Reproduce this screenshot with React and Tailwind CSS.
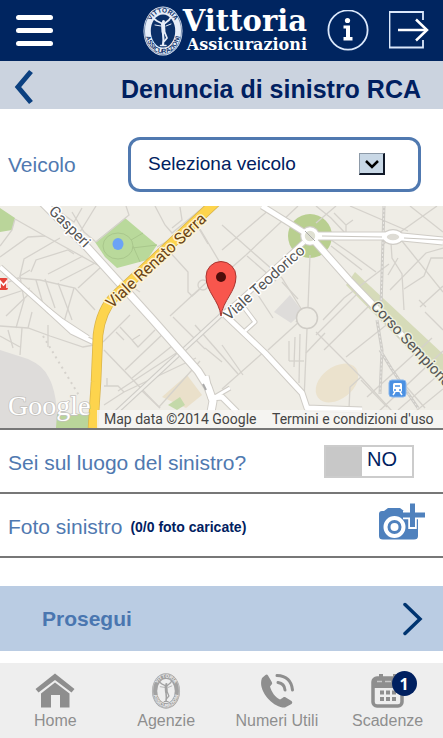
import React, { useState } from 'react';

const Seal = ({ id, color, ground, className }) => (
  <svg viewBox="0 0 40 50" className={className} aria-hidden="true">
    <ellipse cx="20" cy="25" rx="19.5" ry="24.5" fill={color} />
    <ellipse cx="20" cy="25" rx="18.5" ry="23.4" fill="none" stroke={ground} strokeWidth="0.5" />
    <ellipse cx="20" cy="25" rx="12.2" ry="16.5" fill={ground} />
    <path id={`${id}-top`} d="M5.8 25 A14.2 18.6 0 0 1 34.2 25" fill="none" />
    <path id={`${id}-bottom`} d="M2.4 25 A17.6 22.4 0 0 0 37.6 25" fill="none" />
    <text fill={ground} fontSize="6.5" fontWeight="700" fontFamily="Liberation Sans, sans-serif">
      <textPath href={`#${id}-top`} startOffset="50%" textAnchor="middle">VITTORIA</textPath>
    </text>
    <text fill={ground} fontSize="6.5" fontWeight="700" fontFamily="Liberation Sans, sans-serif">
      <textPath href={`#${id}-bottom`} startOffset="50%" textAnchor="middle">ASSICURAZIONI</textPath>
    </text>
    {/* winged figure */}
    <g fill="none" stroke={color} strokeLinecap="round" strokeLinejoin="round">
      <circle cx="20.5" cy="15.5" r="1.5" fill={color} stroke="none" />
      <path d="M20 18 L20.5 26" strokeWidth="4" />
      <path d="M20 18 L14 15 L10 12 M21 18 L26 14 L28 11" strokeWidth="1.8" />
      <path d="M18 20 L12 19 M23 20 L28 18" strokeWidth="1" />
      <path d="M20 27 L20.5 34 L20 39" strokeWidth="2.2" />
      <path d="M22 27 L24 32 L21.5 35" strokeWidth="1.8" />
      <path d="M17.5 39.5 H23" strokeWidth="1.5" />
    </g>
  </svg>
);

// thin streets of the quarter
const streets = [
  'M15 219 L45 236 L103 268 L140 292', 'M15 219 L12 230 L0 246', 'M0 257 L28 237 L45 236', 'M30 270 L20 276 L24 259 L60 238',
  'M31 272 L36 260 L68 250 L74 254', 'M48 274 L83 256', 'M60 281 L95 263', 'M78 288 L101 267', 'M0 286 L18 278 L40 280 L75 288 L95 310',
  'M20 276 L24 300 L16 328', 'M36 280 L43 304', 'M45 279 L55 308', 'M58 283 L72 320', 'M74 288 L64 322', 'M0 298 L30 288', 'M6 316 L32 291',
  'M0 326 L28 328 L50 336 L83 347 L94 345', 'M0 336 L20 347', 'M8 330 L13 348', 'M22 328 L20 355', 'M48 325 L48 347', 'M28 328 L32 312',
  'M96 242 L84 232 L72 212 M80 232 L96 206', 'M96 242 L129 215 L126 206', 'M60 212 L74 222 L82 208', 'M155 206 L165 225 L172 233 L205 206', 'M180 207 L182 220 L172 228',
  'M200 229 L222 266', 'M167 249 L188 272 L188 292 L192 296 L200 289', 'M195 222 L208 244', 'M157 247 L175 237',
  'M103 342 L130 315', 'M104 350 L160 408', 'M116 332 L124 340', 'M120 327 L132 340 L140 335 M132 340 L138 347 L155 330',
  'M125 370 L165 332', 'M132 378 L177 342', 'M118 391 L184 348', 'M104 386 L118 386 L124 392', 'M107 378 L107 386',
  'M104 405 L124 392 L196 358', 'M159 407 L200 361', 'M140 389 L160 408', 'M170 316 L221 269', 'M173 317 L205 349', 'M195 325 L238 374', 'M205 348 L222 362',
  'M222 225 L282 278 L305 315', 'M222 250 L270 209', 'M222 276 L246 255 L298 206', 'M247 256 L276 281', 'M310 255 L308 307',
  'M282 282 L298 299', 'M296 322 L307 308', 'M256 292 L273 318',
  'M316 206 L331 218 L346 234 L346 225 L334 213 M346 225 L353 220', 'M316 223 L336 206', 'M324 235 L350 253 L376 272', 'M323 320 L344 298 L389 264',
  'M331 246 L362 270', 'M350 206 L408 231', 'M382 245 L437 206', 'M410 206 L443 232', 'M402 241 L443 292',
  'M391 243 L392 258 L402 274 L404 310', 'M390 290 L426 253 L443 248', 'M404 289 L424 276 L431 258 H443', 'M388 275 L398 258', 'M420 307 L443 286', 'M419 300 L426 307',
  'M373 302 L324 350', 'M359 292 L316 335', 'M346 357 L390 322', 'M316 332 L361 377 L401 421', 'M306 353 L325 333',
  'M361 377 L350 387 L349 408', 'M361 380 L387 407', 'M367 397 L432 338', 'M376 414 L443 351', 'M398 410 L443 371', 'M410 416 L443 389', 'M404 384 L425 408',
  'M307 329 L304 400', 'M289 341 L289 361', 'M295 337 L294 367', 'M300 334 L299 383', 'M289 361 H304', 'M268 350 L300 321',
  'M222 389 L266 350', 'M222 345 L243 375', 'M425 312 L443 330'
];

const wideRoads = [
  { d: 'M35 195 L86 246 L153 320 L198 371 L208 387 L213 401 L211 412', w: 7 },
  { d: 'M0 267 L47 309 L72 332 L93 342', w: 4 },
  { d: 'M47 309 L62 321 L88 338', w: 4 },
  { d: 'M206 376 L211 398 L222 397 L237 412', w: 5 },
  { d: 'M213 398 L230 388', w: 3 },
  { d: 'M262 206 L310 236', w: 5 },
  { d: 'M310 236 L349 280 L374 306 L443 379', w: 6 },
  { d: 'M310 236 L392 236 L443 241', w: 7 },
  { d: 'M304 242 L238 302 L221 316', w: 4 },
  { d: 'M225 315 L265 353 L302 393 L307 408 L362 410', w: 5 },
  { d: 'M240 302 L255 322 L245 331', w: 3 }
];

const MapView = () => (
  <svg viewBox="0 206 443 222" preserveAspectRatio="xMidYMid slice" className="block h-[222px] w-full" role="img" aria-label="Mappa">
    <rect x="0" y="206" width="443" height="222" fill="#efede6" />
    <path d="M0 350 L28 359 Q44 366 49 378 Q57 392 58 428 H0 Z" fill="#dedcda" />
    <path d="M57 414 H93 V428 H56 Z M0 208 L15 218 L12 230 L0 232 Z" fill="#bad59a" />
    <path d="M95 242 L125 218 L157 245 L147 260 L117 268 L105 257 Z" fill="#b9d99b" />
    <circle cx="310" cy="236" r="22" fill="#b9cf90" />
    <path d="M355 272 L443 354 V384 L346 285 Z" fill="#d6dbb9" />
    <path d="M274 312 L290 295 L303 312 L291 323 Z" fill="#dedcda" />
    <path d="M162 397 L187 375 L202 395 L186 408 Z" fill="#eae0ca" />
    <path d="M168 405 L180 397 L185 405 L177 410 Z" fill="#c4d9a9" />
    <ellipse cx="337" cy="383" rx="24" ry="16" transform="rotate(-38 337 383)" fill="#ebe2cd" />

    <g fill="none" stroke="#d5d2cc" strokeWidth="1.3">
      {streets.map((d) => <path key={d} d={d} />)}
      <ellipse cx="118" cy="246" rx="15" ry="13" stroke="#a9c78c" strokeWidth="1" />
      <path d="M133 246 L140 262 M131 240 L143 233 M132 248 L157 245" stroke="#a9c78c" strokeWidth="1" />
      <circle cx="203" cy="285" r="5" />
      <path d="M43 336 L80 397" strokeDasharray="2 4" strokeWidth="2" />
    </g>
    <g fill="none" stroke="#cfcdc8">
      <path d="M384 206 L381 307 M377 320 L382 350 L380 394 M380 350 L391 368 L418 408" strokeWidth="3" />
      <path d="M384 206 L381 307 M377 320 L382 350 L380 394 M380 350 L391 368 L418 408" stroke="#ebe9e5" strokeDasharray="2 2" />
      <path d="M232 305 L110 418" strokeWidth="5" />
      <path d="M232 305 L110 418" stroke="#f1efe9" strokeWidth="2.5" />
    </g>

    <g fill="none" stroke="#cfccc6" strokeLinejoin="round">
      {wideRoads.map((r) => <path key={r.d} d={r.d} strokeWidth={r.w + 2} />)}
      <circle cx="310" cy="236" r="7" strokeWidth="6" />
      <ellipse cx="393" cy="237" rx="8" ry="5" strokeWidth="6" />
    </g>
    <g fill="none" stroke="#fff" strokeLinejoin="round">
      {wideRoads.map((r) => <path key={r.d} d={r.d} strokeWidth={r.w} />)}
    </g>
    <path d="M322 236 L382 237 M404 238 L443 240" stroke="#c9c6c0" />
    <circle cx="310" cy="236" r="7" fill="#dfe0d2" stroke="#fff" strokeWidth="3.5" />
    <path d="M305 231 L315 241" stroke="#aaa" />
    <ellipse cx="393" cy="237" rx="8" ry="5" fill="#dedcd5" stroke="#fff" strokeWidth="3.5" />
    <circle cx="307" cy="318" r="10.5" fill="#efede6" stroke="#cfccc6" strokeWidth="1.5" />
    <path d="M203 384 L206 390" stroke="#aaa" strokeWidth="2" />

    <path d="M218 200 L115 296 Q101 310 98 335 L96 382 L93 428" fill="none" stroke="#d9b44b" strokeWidth="10.5" />
    <path d="M218 200 L115 296 Q101 310 98 335 L96 382 L93 428" fill="none" stroke="#fdd44d" strokeWidth="9" />
    <ellipse cx="118" cy="244" rx="5.5" ry="6" fill="#6ba3f5" />

    <g fontFamily="Roboto, sans-serif" fontSize="15" stroke="#fff" strokeWidth="3" strokeLinejoin="round" paintOrder="stroke" fill="#555">
      <text transform="translate(48 212) rotate(45)">Gasperi</text>
      <text transform="translate(112 309) rotate(-43)" fontSize="16" fill="#6b4413" stroke="#fff3cb">Viale Renato Serra</text>
      <text transform="translate(229 321) rotate(-42)">Viale Teodorico</text>
      <text transform="translate(370 307) rotate(47)" stroke="#eef0df">Corso Sempione</text>
    </g>

    <rect x="-5" y="278" width="13" height="12" rx="2" fill="#e4443a" />
    <path d="M0 288 V281 L3.5 285 L7 281 V288" fill="none" stroke="#fff" strokeWidth="1.6" />
    <rect x="389" y="380" width="17" height="17" rx="3" fill="#4a90e2" stroke="#86b5ed" />
    <rect x="393" y="383" width="9" height="9" rx="1.5" fill="#fff" />
    <path d="M395 386 H400 M394 390 H396 M399 390 H401" stroke="#4a90e2" strokeWidth="1.5" />
    <path d="M393 395 L395 392 M402 395 L400 392" stroke="#fff" strokeWidth="1.5" />

    <path d="M221 316 C219 300 206 292 206 276.5 A15 15 0 0 1 236 276.5 C236 292 223 300 221 316 Z" fill="#f8564d" stroke="#a83530" strokeWidth="1" />
    <circle cx="221" cy="277" r="5" fill="#4d0d0b" />

    <text x="8" y="415" fontFamily="Liberation Serif, serif" fontSize="28" fill="#fff" stroke="#c4c2be" strokeWidth="1.5" paintOrder="stroke">Google</text>
    <rect x="97" y="410" width="346" height="18" fill="#f6f5f2" fillOpacity="0.85" />
    <g fontFamily="Roboto, sans-serif" fontSize="14" fill="#444">
      <text x="104" y="424">Map data ©2014 Google</text>
      <text x="272" y="424">Termini e condizioni d'uso</text>
    </g>
  </svg>
);

const Header = () => (
  <header className="flex h-[61px] items-center bg-[#002560] pl-4 pr-3 text-white">
    <button type="button" aria-label="Menu" className="flex w-[37px] flex-col gap-2">
      <span className="h-[5px] w-full rounded-full bg-white" />
      <span className="h-[5px] w-full rounded-full bg-white" />
      <span className="h-[5px] w-full rounded-full bg-white" />
    </button>
    <div className="ml-auto flex items-center">
      <Seal id="brand" color="#e6edf8" ground="#0b3068" className="h-[50px] w-10" />
      <div className="text-right font-['DejaVu_Serif',serif] font-bold">
        <p className="text-[29px] leading-7">Vittoria</p>
        <p className="text-[16px] leading-5">Assicurazioni</p>
      </div>
    </div>
    <button type="button" aria-label="Informazioni" className="ml-5">
      <svg viewBox="0 0 42 42" className="size-[42px]">
        <circle cx="21" cy="20" r="19.6" fill="none" stroke="#dbe8fb" strokeWidth="1.8" />
        <circle cx="20.5" cy="10.5" r="2.6" fill="#fff" />
        <path d="M16.5 15.5 H23 V27 H25.5 V30.5 H16.5 V27 H19 V18.5 H16.5 Z" fill="#fff" />
      </svg>
    </button>
    <button type="button" aria-label="Esci" className="ml-5">
      <svg viewBox="0 0 42 42" className="size-[42px]" fill="none" stroke="#dbe8fb" strokeWidth="1.8">
        <path d="M34 10 V2 H0.500 V37.500 H34 V30" />
        <path d="M9 20 H38" stroke="#fff" strokeWidth="2.5" />
        <path d="M27 9.500 L38 20 L27 30.500" stroke="#fff" strokeWidth="2.5" />
      </svg>
    </button>
  </header>
);

const HomeIcon = () => (
  <svg viewBox="0 0 40 36" className="h-9 w-10" fill="#8e8e8e" aria-hidden="true">
    <path d="M20 0.500 L39.5 16 L36.500 19.5 L20 7 L3.500 19.5 L0.5 16 Z" />
    <path d="M20 9.5 L34.5 20.500 V34.5 H25 V22 H16 V34.5 H6 V20.500 Z" />
  </svg>
);

const PhoneIcon = () => (
  <svg viewBox="0 0 36 36" className="size-9" aria-hidden="true">
    <path d="M6.500 2 L3 5 C-2 17 14 35 26 34.500 L32.500 31 Q34 29.5 32.5 28 L26 24 Q24.5 23.5 23.5 25 L21 26.500 C16 24 12.500 19 11 13.5 L13 11 Q13.500 10 12.500 8.5 L9 2.5 Q8 1 6.500 2 Z" fill="#8e8e8e" />
    <path d="M18 2.500 Q32 3 33.5 17 M19 9.500 Q25.500 10.500 26 17" fill="none" stroke="#8e8e8e" strokeWidth="3" strokeLinecap="round" />
  </svg>
);

const CalendarIcon = () => (
  <svg viewBox="0 0 34 36" className="h-9 w-[34px]" aria-hidden="true">
    <rect x="2" y="5" width="29" height="28" rx="4" fill="none" stroke="#8e8e8e" strokeWidth="3.5" />
    <path d="M3 6 H30 V15 H3 Z M8 1 H12 V6 H8 Z M22 1 H26 V6 H22 Z" fill="#8e8e8e" />
    <path d="M6 8.500 H11 M14 8.500 H20" fill="none" stroke="#c8c8c8" strokeWidth="1.500" />
    <path d="M9 19.5 H13 M15 19.5 H19 M21 19.5 H25 M9 26 H13 M15 26 H19 M21 26 H25" stroke="#8e8e8e" strokeWidth="3.8" />
  </svg>
);

const tabs = [
  { label: 'Home', icon: <HomeIcon /> },
  { label: 'Agenzie', icon: <Seal id="agenzie" color="#a2a2a2" ground="#eeeeee" className="h-9 w-[30px]" /> },
  { label: 'Numeri Utili', icon: <PhoneIcon /> },
  { label: 'Scadenze', icon: <CalendarIcon />, badge: 1 }
];

const App = () => {
  const [onSite, setOnSite] = useState(false);

  return (
    <div className="flex min-h-screen flex-col bg-white font-['Liberation_Sans',Arial,sans-serif] text-[#002060]">
      <Header />

      <div className="flex h-12 items-center justify-between bg-[#cbd3df] pl-3 pr-[22px]">
        <button type="button" aria-label="Indietro" className="pt-1">
          <svg viewBox="0 0 24 36" className="h-9 w-6" fill="none" stroke="#0b4080" strokeWidth="5">
            <path d="M19 2.5 L6 18 L19 33.5" />
          </svg>
        </button>
        <h1 className="pt-2 text-[25px] font-bold leading-8">Denuncia di sinistro RCA</h1>
      </div>

      <main>
        {/* Vehicle */}
        <div className="flex items-center pb-[14px] pl-2 pr-[22px] pt-7">
          <label htmlFor="veicolo" className="w-[120px] text-[21px] text-[#5079b0]">Veicolo</label>
          <div className="relative flex-1">
            <select id="veicolo" className="block h-[55px] w-full appearance-none rounded-xl border-[3px] border-[#5079b0] bg-white pl-[17px] text-[19px]">
              <option>Seleziona veicolo</option>
            </select>
            <span className="pointer-events-none absolute right-9 top-4 flex h-[22px] w-[26px] items-center justify-center border border-b-2 border-r-2 border-b-[#101828] border-l-[#8d9aa8] border-r-[#101828] border-t-[#8d9aa8] bg-[#c9d8e6]">
              <svg viewBox="0 0 14 10" className="h-[10px] w-[14px]" fill="none" stroke="#000" strokeWidth="2.5">
                <path d="M1 2 L7 8 L13 2" />
              </svg>
            </span>
          </div>
        </div>

        <MapView />

        {/* On the spot */}
        <div className="flex h-16 items-center justify-between border-t-2 border-[#777] pl-2 pr-[29px]">
          <span id="luogo" className="pt-1 text-[21px] text-[#5079b0]">Sei sul luogo del sinistro?</span>
          <button
            type="button"
            role="switch"
            aria-checked={onSite}
            aria-labelledby="luogo"
            onClick={() => setOnSite(!onSite)}
            className="flex h-[33px] w-[90px] border-2 border-[#ccc] text-[20px] leading-6"
          >
            <span className="h-full w-9 bg-[#c8c8c8]" />
            <span className="pl-[5px]">{onSite ? 'SI' : 'NO'}</span>
          </button>
        </div>

        {/* Photos */}
        <div className="flex h-[66px] items-center justify-between border-y-2 border-[#777] pl-2 pr-[18px]">
          <p className="flex items-center gap-2 pt-1">
            <span className="text-[21px] text-[#5079b0]">Foto sinistro</span>
            <span className="text-[14px] font-bold">(0/0 foto caricate)</span>
          </p>
          <button type="button" aria-label="Aggiungi foto" className="mb-2">
            <svg viewBox="0 0 48 37" className="h-[37px] w-12">
              <path d="M2 11 Q2 8 5 8 H7 L11 5 H23 L27 8 H38 Q41 8 41 11 V33 Q41 36.5 37 36.5 H6 Q2 36.5 2 33 Z" fill="#4f81bd" />
              <circle cx="17.5" cy="24" r="9" fill="#4f81bd" stroke="#fff" strokeWidth="4" />
              <circle cx="17.5" cy="24" r="4" fill="#fff" />
              <path d="M35.5 0 V26 M26 12 H48" stroke="#fff" strokeWidth="8.5" />
              <path d="M35.5 0.500 V24 M24 12 H48" stroke="#4f81bd" strokeWidth="5" />
            </svg>
          </button>
        </div>

        <button type="button" className="mt-7 flex h-[65px] w-full items-center justify-between bg-[#bacce3] pl-[42px] pr-5 text-[21px] font-bold text-[#4a76b0]">
          Prosegui
          <svg viewBox="0 0 20 34" className="h-[34px] w-5" fill="none" stroke="#003470" strokeWidth="3.5" strokeLinecap="round" aria-hidden="true">
            <path d="M2 2.5 L17 17 L2 31.5" />
          </svg>
        </button>
      </main>

      <nav className="mt-auto grid h-[75px] grid-cols-4 bg-[#eee] pt-[10px]">
        {tabs.map((tab) => (
          <a key={tab.label} href="#" className="flex flex-col items-center whitespace-nowrap text-[16px] leading-6 text-[#8e8e8e]">
            <span className="relative">
              {tab.icon}
              {tab.badge && (
                <span className="absolute -right-3 -top-[2px] flex size-[25px] items-center justify-center rounded-full bg-[#002060] font-['Noto_Sans',sans-serif] text-[16px] font-bold text-white">
                  {tab.badge}
                </span>
              )}
            </span>
            {tab.label}
          </a>
        ))}
      </nav>
    </div>
  );
};

export default App;
